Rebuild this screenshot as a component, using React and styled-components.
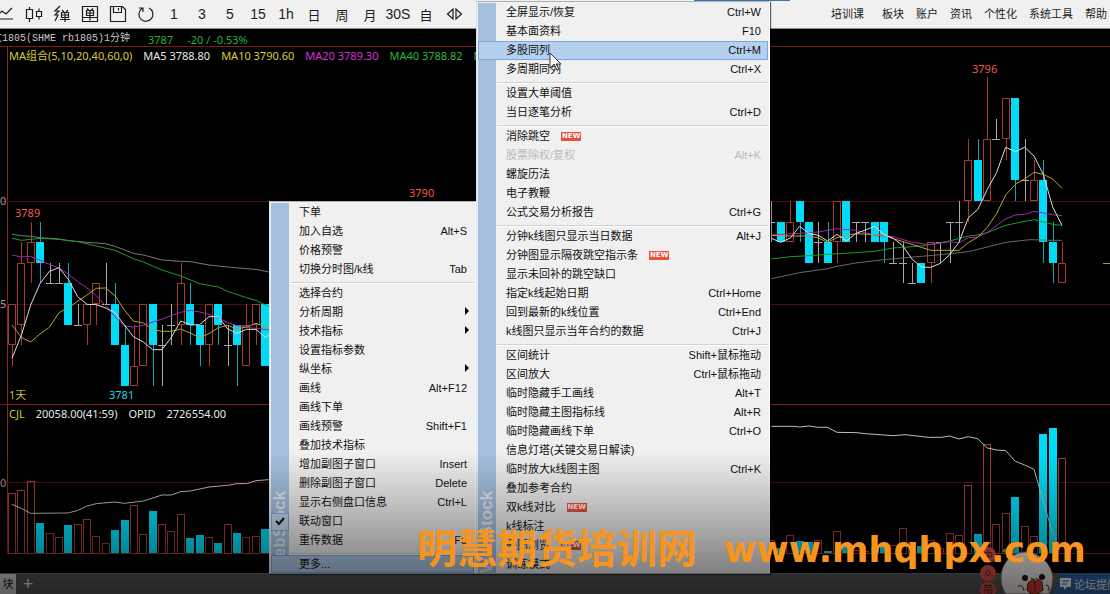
import React from "react";
import styled, { createGlobalStyle, css } from "styled-components";

const GlobalStyle = createGlobalStyle`
  * { box-sizing: border-box; }
  html, body { margin: 0; padding: 0; background: #000; }
  body { font-family: "Liberation Sans", "Noto Sans CJK SC", sans-serif; font-size: 11px; overflow: hidden; }
  button { font: inherit; color: inherit; background: none; border: 0; padding: 0; margin: 0; }
  ul { list-style: none; margin: 0; padding: 0; }
`;

const tahoma = css`font-family: "Noto Sans", "Noto Sans CJK SC", sans-serif; font-size: 11px;`;

const Screen = styled.div`
  position: relative;
  display: flex;
  flex-direction: column;
  min-height: 100vh;
  overflow: hidden;
  background: #000;
`;

const Toolbar = styled.header`
  display: flex;
  justify-content: space-between;
  flex: none;
  height: 29px;
  background: #f0f0f0;
  border-bottom: 1px solid #8a8f8f;
`;

const ToolGroup = styled.div`
  display: flex;
  margin-left: -8px;
`;

const ToolButton = styled.button`
  display: flex;
  align-items: center;
  justify-content: center;
  flex: none;
  width: 28px;
  height: 28px;
  font-family: "Liberation Sans", "Noto Sans CJK SC", sans-serif;
  font-size: ${(p) => (p.$cjk ? 13 : 14)}px;
  color: #1c1c1c;
  svg { width: 18px; height: 18px; fill: none; stroke: #1c1c1c; stroke-width: 1.2; }
`;

const MainNav = styled.nav`
  display: flex;
  align-items: center;
  gap: 12px;
  padding: 0 3px 2px 0;
`;

const NavLink = styled.a`
  color: #222;
  text-decoration: none;
  white-space: nowrap;
  margin-right: ${(p) => (p.$wide ? 6 : 0)}px;
`;

const TitleBar = styled.div`
  ${tahoma}
  display: flex;
  align-items: center;
  flex: none;
  gap: 14px;
  height: 17px;
  padding-top: 4px;
  color: #25b136;
  white-space: pre;
`;

const Contract = styled.span`
  font-family: "Liberation Mono", "Noto Sans CJK SC", monospace;
  font-size: 10px;
  line-height: 12px;
  color: #c8c8c8;
  margin: -1px 4px 0 -8px;
`;

const Pane = styled.section`
  position: relative;
  flex: ${(p) => (p.$grow ? "1 0" : "0 0")} ${(p) => p.$size}px;
  border-top: 1px solid #7a1c14;
  svg { display: block; position: absolute; inset: 0; }
`;

const Legend = styled.div`
  ${tahoma}
  position: relative;
  display: flex;
  gap: 11px;
  padding-left: 9px;
  line-height: 18px;
  white-space: nowrap;
`;

const Tone = styled.span`color: ${(p) => p.$color};`;

const TabBar = styled.footer`
  display: flex;
  align-items: center;
  flex: none;
  gap: 6px;
  height: 21px;
  background: #555;
  border-top: 1px solid #666;
`;

const Tab = styled.button`
  width: ${(p) => (p.$active ? 16 : 12)}px;
  height: 20px;
  line-height: 20px;
  background: ${(p) => (p.$active ? "#d2d2d2" : "transparent")};
  color: ${(p) => (p.$active ? "#111" : "#e8e8e8")};
  font-size: ${(p) => (p.$active ? 11 : 18)}px;
`;

const Menu = styled.div`
  position: absolute;
  left: ${(p) => p.$left}px;
  top: ${(p) => p.$top}px;
  width: ${(p) => p.$width}px;
  padding: 1px 1px 0;
  background: #f0f0f0;
  border: 1px solid #a9b0b8;
  border-left-color: #d8e4f0;
  border-right-color: #fafafa;
  box-shadow: 1px 1px 1px rgba(0, 0, 0, 0.6);
`;

const Strip = styled.div`
  position: absolute;
  left: 1px;
  top: 1px;
  bottom: 0;
  width: 18px;
  background: #a5c0de;
  font: bold 17px/18px "Liberation Sans", sans-serif;
  color: rgba(255, 255, 255, 0.7);
  span { position: absolute; left: 0; bottom: 0; writing-mode: vertical-rl; transform: rotate(180deg); }
`;

const MenuList = styled.ul`
  position: relative;
`;

const MenuItem = styled.li`
  display: flex;
  height: 19px;
  &:last-child { height: 18px; }
`;

const MenuButton = styled.button`
  display: flex;
  align-items: center;
  flex: 1;
  padding: 0 6px 0 27px;
  border: 1px solid ${(p) => (p.$hot ? "#78a9dc" : "transparent")};
  background: ${(p) => (p.$hot ? "#b5d0ee" : "transparent")};
  color: ${(p) => (p.disabled ? "#b9b9b9" : "#111")};
  line-height: 17px;
  white-space: nowrap;
`;

const Shortcut = styled.span`margin-left: auto;`;

const SubArrow = styled.span`
  margin: 0 -2px 4px auto;
  border-left: 4px solid #000;
  border-top: 4px solid transparent;
  border-bottom: 4px solid transparent;
`;

const NewTag = styled.span`
  margin: 0 0 1px 11px;
  padding: 0 1px;
  background: #e8503c;
  color: #fff;
  font: bold 7px/9px "DejaVu Sans", sans-serif;
`;

const Separator = styled.li`
  height: 5px;
  margin-left: 19px;
  border-bottom: 1px solid #fff;
  box-shadow: inset 0 -1px 0 #d2d2d2;
`;

const Tick = styled.span`
  display: flex;
  align-items: center;
  justify-content: center;
  width: 18px;
  height: 18px;
  margin: 0 10px 0 -28px;
  border: 1px solid #7fb2e8;
  background: #c3daf2;
`;

const TitleEdge = styled.div`
  position: absolute;
  left: 694px;
  top: 0;
  width: 96px;
  height: 1px;
  background: #3779ae;
`;

const Pointer = styled.svg`
  position: absolute;
  left: 549px;
  top: 52px;
`;

const Helper = styled.aside`
  position: absolute;
  right: 0;
  bottom: 0;
  display: flex;
  align-items: flex-end;
`;

const Mascot = styled.svg`
  position: relative;
  margin-right: -8px;
`;

const ForumLink = styled.a`
  display: flex;
  align-items: center;
  gap: 3px;
  width: 57px;
  height: 21px;
  padding-left: 7px;
  background: #2d62a3;
  clip-path: polygon(8px 0, 100% 0, 100% 100%, 0 100%);
  color: #f2f6fa;
  text-decoration: none;
  white-space: nowrap;
  overflow: hidden;
  svg { flex: none; }
`;

const Shade = styled.div`
  position: absolute;
  left: 0;
  right: 0;
  bottom: 0;
  height: 142px;
  background: linear-gradient(rgba(0, 0, 0, 0), rgba(0, 0, 0, 0.55));
  pointer-events: none;
`;

const Watermark = styled.div`
  position: absolute;
  left: 417px;
  bottom: 20px;
  display: flex;
  align-items: center;
  gap: 27px;
  color: #f7941d;
  font: bold 40px/48px "Noto Sans CJK SC", sans-serif;
  white-space: nowrap;
  pointer-events: none;
`;

const SiteName = styled.span`
  padding-top: 8px;
  font: bold 35px/48px "DejaVu Sans", sans-serif;
`;

/* [slot, kind, body top, body bottom, high, low]; r = up, c = down, d = flat */
const candles = [
  [0, "r", 3785, 3783, 3785, 3782], [1, "r", 3787, 3784, 3788, 3783], [2, "r", 3788, 3787, 3789, 3786],
  [3, "c", 3788, 3787, 3789, 3786], [4, "d", 3786, 3786, 3787, 3786], [5, "d", 3786, 3786, 3787, 3786],
  [6, "c", 3786, 3784, 3787, 3784], [7, "d", 3784, 3784, 3785, 3784], [8, "r", 3785, 3784, 3785, 3783],
  [9, "r", 3786, 3785, 3786, 3784], [10, "d", 3785, 3785, 3787, 3785], [11, "c", 3785, 3783, 3786, 3783],
  [12, "c", 3783, 3781, 3784, 3781], [13, "r", 3782, 3781, 3784, 3781], [14, "r", 3785, 3782, 3785, 3782],
  [15, "c", 3785, 3783, 3785, 3781], [16, "d", 3783, 3783, 3784, 3781], [17, "d", 3784, 3784, 3785, 3783],
  [18, "r", 3786, 3784, 3787, 3783], [19, "c", 3785, 3784, 3786, 3783], [20, "c", 3784, 3783, 3784, 3782],
  [21, "r", 3785, 3783, 3785, 3782], [22, "c", 3785, 3784, 3785, 3783], [23, "d", 3783, 3783, 3784, 3782],
  [24, "c", 3784, 3783, 3784, 3781], [25, "r", 3784, 3782, 3785, 3782], [26, "r", 3785, 3784, 3785, 3783],
  [27, "c", 3785, 3782, 3785, 3782],
  [81, "d", 3789, 3789, 3790, 3788], [82, "c", 3789, 3788, 3789, 3788], [83, "r", 3789, 3788, 3790, 3788],
  [84, "c", 3790, 3789, 3790, 3788], [85, "c", 3789, 3787, 3789, 3787], [86, "d", 3788, 3788, 3789, 3787],
  [87, "c", 3788, 3787, 3789, 3787], [88, "r", 3790, 3788, 3790, 3787], [89, "c", 3790, 3788, 3790, 3788],
  [90, "d", 3789, 3789, 3789, 3788], [91, "d", 3789, 3789, 3789, 3788], [92, "c", 3789, 3788, 3789, 3788],
  [93, "c", 3789, 3788, 3789, 3787], [94, "d", 3787, 3787, 3788, 3787], [95, "d", 3787, 3787, 3788, 3786],
  [96, "d", 3786, 3786, 3787, 3786], [97, "c", 3787, 3786, 3787, 3786], [98, "r", 3788, 3787, 3788, 3786],
  [99, "d", 3788, 3788, 3788, 3787], [100, "d", 3789, 3789, 3789, 3787], [101, "d", 3789, 3789, 3790, 3788],
  [102, "r", 3792, 3790, 3793, 3789], [103, "c", 3792, 3790, 3793, 3790], [104, "r", 3793, 3790, 3796, 3790],
  [105, "d", 3793, 3793, 3794, 3793], [106, "r", 3795, 3793, 3795, 3792], [107, "c", 3795, 3791, 3795, 3790],
  [108, "d", 3791, 3791, 3793, 3790], [109, "r", 3791, 3790, 3792, 3790], [110, "c", 3791, 3788, 3792, 3787],
  [111, "c", 3788, 3787, 3789, 3786], [112, "r", 3787, 3786, 3788, 3786],
];

/* [slot, kind, height] */
const volumes = [
  [0, "r", 60], [1, "r", 63], [2, "r", 72], [3, "c", 30], [4, "r", 20], [5, "r", 16], [6, "c", 28], [7, "r", 29],
  [8, "r", 34], [9, "r", 17], [10, "r", 10], [11, "c", 23], [12, "c", 33], [13, "r", 48], [14, "r", 19], [15, "c", 42],
  [16, "r", 29], [17, "r", 22], [18, "r", 39], [19, "c", 15], [20, "c", 18], [21, "r", 16], [22, "c", 10], [23, "r", 29],
  [24, "c", 20], [25, "r", 16], [26, "r", 17], [27, "c", 24],
  [81, "r", 13], [82, "c", 5], [83, "r", 18], [84, "c", 12], [85, "c", 11], [86, "r", 13], [87, "c", 2], [88, "r", 22],
  [89, "c", 6], [90, "r", 3], [91, "r", 2], [92, "c", 6], [93, "c", 6], [94, "r", 8], [95, "r", 25], [96, "r", 11],
  [97, "c", 7], [98, "r", 13], [99, "r", 5], [100, "r", 20], [101, "r", 18], [102, "r", 68], [103, "c", 19],
  [104, "r", 109], [105, "r", 29], [106, "r", 40], [107, "c", 56], [108, "r", 27], [109, "r", 17], [110, "c", 119],
  [111, "c", 125], [112, "r", 95],
];

const slotX = (i) => Math.round(12 + i * 9.375);
const priceY = (p) => Math.round(154 + (3790 - p) * 20.6);
const RED = "#a63c30";
const CYAN = "#00dcf8";

function Candle({ data: [i, kind, top, bottom, high, low] }) {
  const x = slotX(i);
  const [t, b, h, l] = [top, bottom, high, low].map(priceY);
  if (kind === "d") {
    return <path d={`M${x + 0.5} ${h}V${l}M${x - 4} ${t + 0.5}h8`} stroke="#a8a8a8" fill="none" />;
  }
  if (kind === "c") {
    return (
      <g>
        <path d={`M${x + 0.5} ${h}V${l}`} stroke="#12a7b8" />
        <rect x={x - 4} y={t} width="8" height={b - t} fill={CYAN} />
      </g>
    );
  }
  return (
    <path
      d={`M${x + 0.5} ${h}V${t}M${x + 0.5} ${b}V${l}M${x - 3.5} ${t + 0.5}h7V${b - 0.5}h-7Z`}
      stroke={RED}
      fill="none"
    />
  );
}

const Curve = styled.polyline`
  fill: none;
  stroke: ${(p) => p.$color};
  stroke-width: 1px;
  vector-effect: non-scaling-stroke;
`;

function PriceChart() {
  return (
    <svg width="100%" height="358" aria-hidden="true">
      <path d="M7.5 0V358" stroke="#8a241a" />
      <line x1="0" x2="100%" y1="154.5" y2="154.5" stroke="#4a0e0a" />
      <line x1="0" x2="100%" y1="257.5" y2="257.5" stroke="#4a0e0a" />
      {candles.map((c) => <Candle key={c[0]} data={c} />)}
      <g transform="translate(0 133) scale(0.33333)">
        <Curve $color="#787878" points="36,163 64,167 92,169 120,173 177,177 205,182 261,187 317,191 345,199 400,220 430,225 486,240 542,244 571,245 627,255 683,261 739,266 768,268 806,276" />
        <Curve $color="#1f9a2a" points="36,175 64,181 120,175 177,178 233,185 289,198 345,211 400,236 430,246 486,270 542,288 599,311 655,321 683,334 739,353 768,361 806,380" />
        <Curve $color="#a528ac" points="36,225 64,231 92,229 148,253 177,264 205,282 233,305 261,324 289,347 317,377 345,410 373,438 400,441 430,436 486,417 542,397 571,391 599,396 627,403 655,413 683,428 711,437 739,442 768,445 806,450" />
        <Curve $color="#b3a233" points="36,435 64,472 92,486 120,462 148,442 177,398 205,383 261,345 289,325 317,324 345,347 373,390 400,423 430,429 458,449 486,454 514,454 542,447 599,472 627,461 655,443 683,436 711,447 739,441 768,430 806,444" />
        <Curve $color="#dcdcdc" points="36,535 64,466 92,375 120,311 148,274 177,263 205,298 233,350 261,373 289,374 317,384 345,398 373,435 400,470 430,486 458,509 486,509 514,472 542,423 571,435 599,434 627,410 655,410 683,447 711,460 739,448 768,448 796,472 806,465" />
      </g>
      <g transform="translate(765 13) scale(0.33333)">
        <Curve $color="#686868" points="19,656 104,638 188,626 216,619 272,609 357,599 469,589 526,584 610,575 667,561 722,547 795,539 863,541 891,541" />
        <Curve $color="#1f9a2a" points="19,597 76,590 132,587 188,583 272,578 329,574 385,564 469,558 497,553 554,543 610,528 638,525 667,518 722,496 779,484 807,479 863,493 891,496" />
        <Curve $color="#a528ac" points="19,525 104,520 160,516 216,506 272,511 329,525 385,530 441,547 497,554 554,545 582,548 610,533 638,531 667,517 722,477 751,465 779,463 807,454 863,464 891,467" />
        <Curve $color="#b3a233" points="19,526 76,528 132,528 160,534 188,547 216,533 272,521 357,525 385,536 441,553 497,571 582,571 610,548 638,532 667,502 695,460 722,405 751,373 779,357 807,337 835,343 863,357 891,385" />
        <Curve $color="#dcdcdc" points="19,535 47,547 76,534 104,499 132,520 160,526 188,543 216,523 244,543 272,521 301,510 329,499 357,524 385,535 413,557 441,597 469,621 497,622 526,610 554,584 582,547 610,473 638,449 667,388 695,337 722,262 751,275 779,262 807,288 835,343 863,441 891,496" />
      </g>
      <path d="M1103 216.5h7" stroke="#a5983a" />
      <g fontFamily="Noto Sans, sans-serif" fontSize="11" fill="#ee5c44">
        <text x="15" y="170">3789</text>
        <text x="409" y="150">3790</text>
        <text x="972" y="26">3796</text>
        <text x="109" y="352" fill="#2ecbe0">3781</text>
        <text x="0" y="158" fill="#999">0</text>
        <text x="0" y="261" fill="#999">5</text>
      </g>
      <text x="9" y="352" fill="#c5b840" fontSize="11" fontFamily="Noto Sans, Noto Sans CJK SC, sans-serif">1天</text>
    </svg>
  );
}

function VolumeChart() {
  return (
    <svg width="100%" height="169" aria-hidden="true">
      <path d="M7.5 0V149" stroke="#8a241a" />
      <line x1="0" x2="100%" y1="77.5" y2="77.5" stroke="#4a100a" />
      <line x1="7" x2="100%" y1="148.5" y2="148.5" stroke="#8a241a" />
      {volumes.map(([i, kind, h]) =>
        kind === "c"
          ? <rect key={i} x={slotX(i) - 4} y={148 - h} width="8" height={h} fill={CYAN} />
          : <rect key={i} x={slotX(i) - 3.5} y={148.5 - h} width="7" height={h} fill="none" stroke={RED} />
      )}
      <g transform="translate(0 -25) scale(0.33333)">
        <Curve $color="#bdbdbd" points="36,373 64,385 92,400 205,399 233,391 261,378 289,371 345,366 373,370 430,363 486,345 514,345 542,335 571,333 627,321 683,316 711,311 739,311 768,302 806,299" />
      </g>
      <g transform="translate(765 -5) scale(0.33333)">
        <Curve $color="#bdbdbd" points="19,79 85,79 104,81 132,78 160,82 188,82 216,97 276,98 301,101 385,107 420,104 490,112 530,112 554,108 582,117 610,110 638,116 667,144 695,150 722,152 751,184 779,195 807,208 835,305 863,400 880,436" />
      </g>
      <text x="0" y="82" fill="#999" fontSize="11" fontFamily="Noto Sans, sans-serif">0</text>
    </svg>
  );
}

const contextItems = [
  ["下单"], ["加入自选", "Alt+S"], ["价格预警"], ["切换分时图/k线", "Tab"], null,
  ["选择合约"], ["分析周期", ">"], ["技术指标", ">"], ["设置指标参数"], ["纵坐标", ">"], ["画线", "Alt+F12"],
  ["画线下单"], ["画线预警", "Shift+F1"], ["叠加技术指标"], ["增加副图子窗口", "Insert"],
  ["删除副图子窗口", "Delete"], ["显示右侧盘口信息", "Ctrl+L"], ["联动窗口", "", { checked: true }],
  ["重传数据", "F5"], null, ["更多...", "", { hot: true }],
];

const moreItems = [
  ["全屏显示/恢复", "Ctrl+W"], ["基本面资料", "F10"], ["多股同列", "Ctrl+M", { hot: true }],
  ["多周期同列", "Ctrl+X"], null,
  ["设置大单阈值"], ["当日逐笔分析", "Ctrl+D"], null,
  ["消除跳空", "", { fresh: true }], ["股票除权/复权", "Alt+K", { disabled: true }], ["螺旋历法"], ["电子教鞭"],
  ["公式交易分析报告", "Ctrl+G"], null,
  ["分钟k线图只显示当日数据", "Alt+J"], ["分钟图显示隔夜跳空指示条", "", { fresh: true }],
  ["显示未回补的跳空缺口"], ["指定k线起始日期", "Ctrl+Home"], ["回到最新的k线位置", "Ctrl+End"],
  ["k线图只显示当年合约的数据", "Ctrl+J"], null,
  ["区间统计", "Shift+鼠标拖动"], ["区间放大", "Ctrl+鼠标拖动"], ["临时隐藏手工画线", "Alt+T"],
  ["临时隐藏主图指标线", "Alt+R"], ["临时隐藏画线下单", "Ctrl+O"], ["信息灯塔(关键交易日解读)"],
  ["临时放大k线图主图", "Ctrl+K"], ["叠加参考合约"], ["双k线对比", "", { fresh: true }], ["k线标注"],
  ["叠图浏览", "", { fresh: true }], ["训练模式"],
];

function PopupMenu({ items, left, top, width, label }) {
  return (
    <Menu $left={left} $top={top} $width={width} aria-label={label}>
      <Strip aria-hidden="true"><span>WebStock</span></Strip>
      <MenuList>
        {items.map((item, n) => {
          if (!item) return <Separator key={n} />;
          const [text, key, flags = {}] = item;
          return (
            <MenuItem key={n}>
              <MenuButton type="button" $hot={flags.hot} disabled={flags.disabled}>
                {flags.checked && (
                  <Tick>
                    <svg width="10" height="9" fill="none" stroke="#111" strokeWidth="2">
                      <path d="M1 4l3 3 5-6" />
                    </svg>
                  </Tick>
                )}
                {text}
                {flags.fresh && <NewTag>NEW</NewTag>}
                {key === ">" ? <SubArrow /> : key && <Shortcut>{key}</Shortcut>}
              </MenuButton>
            </MenuItem>
          );
        })}
      </MenuList>
    </Menu>
  );
}

const tools = [
  ["走势", <svg viewBox="0 0 18 18"><path d="M1 10l4-4 4 3 6-6M1 14h15" /></svg>],
  ["K线", <svg viewBox="0 0 18 18"><path d="M1.500 4.500h6v9h-6zM4.500 2v2.500M4.500 13.500V17M11.500 6.500h5v5h-5zM14 3.500v3M14 11.500v3" /></svg>],
  ["闪电下单", <svg viewBox="0 0 18 18"><path d="M7 1L2 6h4l-4 4h3l-3 6M9 5l2 2M15 5l-2 2M8.500 7.500h7v5h-7zM8.500 10h7M12 7.500V17M7 14.500h10" /></svg>],
  ["下单", <svg viewBox="0 0 18 18"><path d="M1.500 1.500h15v15h-15zM6 3.500l2 2M12 3.500l-2 2M5.500 5.500h7v5h-7zM5.500 8h7M9 5.500v10M1.500 12.500h15" /></svg>],
  ["保存", <svg viewBox="0 0 18 18"><path d="M1.500 1.500h12l3 3v12h-15zM4.500 1.500v6h8v-6M9.500 3v2.500" /></svg>],
  ["刷新", <svg viewBox="0 0 18 18"><path d="M5 3.500A7 7 0 1 0 12 3M2 3h4v4" /></svg>],
  ["1"], ["3"], ["5"], ["15"], ["1h"], ["日"], ["周"], ["月"], ["30S"], ["自"],
  ["左右", <svg viewBox="0 0 18 18"><path d="M8 4v10L2.500 9zM11 4v10l5.500-5z" /></svg>],
];

export default function App() {
  return (
    <Screen>
      <GlobalStyle />
      <Toolbar>
        <ToolGroup>
          {tools.map(([name, icon]) => (
            <ToolButton key={name} type="button" aria-label={name} $cjk={/[^\w]/.test(name)}>
              {icon || name}
            </ToolButton>
          ))}
        </ToolGroup>
        <MainNav>
          <NavLink href="#course" $wide>培训课</NavLink>
          {["板块", "账户", "资讯", "个性化", "系统工具", "帮助"].map((t) => <NavLink key={t} href="#menu">{t}</NavLink>)}
        </MainNav>
      </Toolbar>
      <TitleBar>
        <Contract>文1805(SHME rb1805)1分钟</Contract>
        <span>3787</span>
        <span>-20 / -0.53%</span>
      </TitleBar>
      <Pane $grow $size={358}>
        <PriceChart />
        <Legend>
          <Tone $color="#d8cc3c">MA组合(5,10,20,40,60,0)</Tone>
          <Tone $color="#e8e8e8">MA5 3788.80</Tone>
          <Tone $color="#d8cc3c">MA10 3790.60</Tone>
          <Tone $color="#d832dc">MA20 3789.30</Tone>
          <Tone $color="#2cb83a">MA40 3788.82</Tone>
          <Tone $color="#8a8a8a">M</Tone>
        </Legend>
      </Pane>
      <Pane $size={169}>
        <VolumeChart />
        <Legend>
          <Tone $color="#d8cc3c">CJL</Tone>
          <Tone $color="#e8e8e8">20058.00(41:59)</Tone>
          <Tone $color="#e8e8e8">OPID</Tone>
          <Tone $color="#e8e8e8">2726554.00</Tone>
        </Legend>
      </Pane>
      <TabBar>
        <Tab type="button" $active>块</Tab>
        <Tab type="button" aria-label="新增">+</Tab>
      </TabBar>

      <Helper>
        <Mascot width="84" height="52" aria-hidden="true">
          <g fill="#d8504a">
            <circle cx="11" cy="13" r="8" /><circle cx="11" cy="31" r="8" /><circle cx="11" cy="48" r="8" />
          </g>
          <g fill="#5a1a18" fontFamily="Noto Sans CJK SC, sans-serif" fontSize="10" textAnchor="middle">
            <text x="11" y="17">中</text><text x="12" y="34">o,</text><text x="11" y="51">简</text>
          </g>
          <path d="M24 36C24 20 36 10 48 10S75 20 76 36Q76 46 72 52H29Q24 46 24 36z" fill="#f0ece8" stroke="#765" />
          <path d="M37 12Q30 6 36 1Q41 5 37 12zM34 9Q27 4 25 9Q29 13 34 9z" fill="#7f9a45" />
          <g fill="#2a1210"><circle cx="48" cy="36" r="3" /><circle cx="65" cy="35" r="3" /></g>
          <path d="M54 36l3 2 3-2M41 44q5-2 6 5M69 43q5 1 2 6" stroke="#432" fill="none" />
          <path d="M50 48l1-7 5-4 2 3 3-3 4 3 1 8-5 4H54zM58 40v9" fill="#d93b2c" stroke="#5a1a18" />
        </Mascot>
        <ForumLink href="#forum">
          <svg width="11" height="12" aria-hidden="true">
            <path d="M0 0h11v9H7l-3 3V9H0z" fill="#f2f6fa" />
            <path d="M2 3h7M2 6h5" stroke="#2d62a3" />
          </svg>
          论坛提问
        </ForumLink>
      </Helper>

      <TitleEdge />
      <PopupMenu items={contextItems} left={269} top={201} width={207} label="右键菜单" />
      <PopupMenu items={moreItems} left={476} top={1} width={294} label="更多" />
      <Pointer width="13" height="20" aria-hidden="true">
        <path d="M1 1v15l4-4 3 6 2-1-3-5h5z" fill="#fff" stroke="#333" />
      </Pointer>
      <Shade />
      <Watermark>
        明慧期货培训网
        <SiteName>www.mhqhpx.com</SiteName>
      </Watermark>
    </Screen>
  );
}
